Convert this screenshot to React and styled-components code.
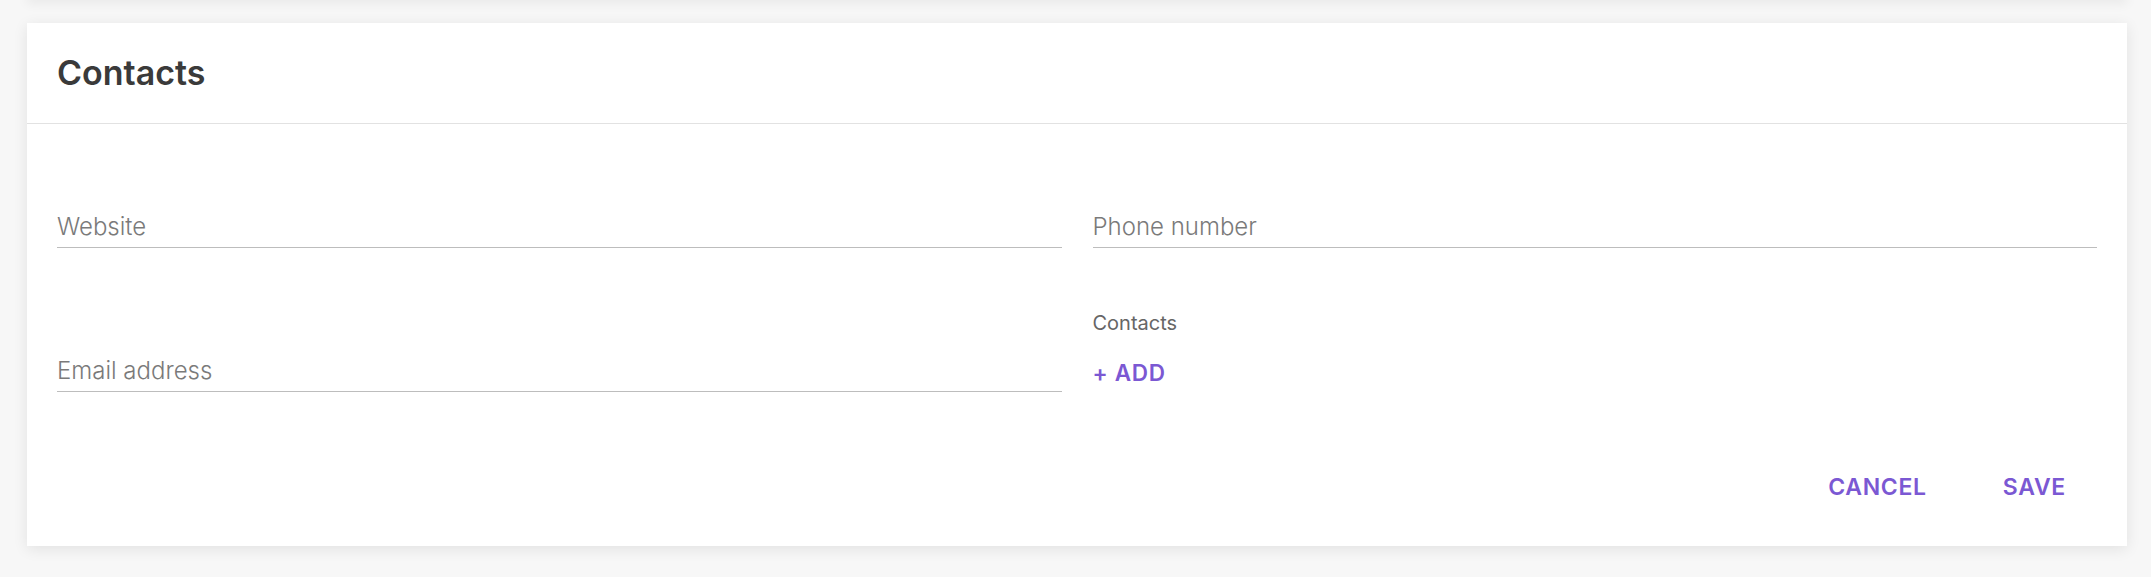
import { useState } from 'react'
import styled, { createGlobalStyle } from 'styled-components'

const GlobalStyle = createGlobalStyle`
	html, body {
		margin: 0;
		padding: 0;
		background: #f7f7f7;
		font-family: Inter, 'Noto Sans', 'Liberation Sans', sans-serif;
	}
	* {
		box-sizing: border-box;
	}
`

const Page = styled.div`
	padding: 23px 24px 31px 27px;
`

const PrevCard = styled.div`
	height: 10px;
	margin: -33px 0 23px;
	background: #fff;
	box-shadow: 0 3px 12px rgba(0, 0, 0, 0.07);
`

const Card = styled.section`
	width: 2100px;
	background: #fff;
	box-shadow: 0 3px 14px rgba(0, 0, 0, 0.09);
`

const CardHeader = styled.header`
	height: 101px;
	display: flex;
	align-items: center;
	padding: 0 30px;
	border-bottom: 1px solid #e2e2e2;
`

const Title = styled.h2`
	margin: 0;
	font-size: 34px;
	font-weight: 600;
	color: #3a3a3a;
	line-height: 40px;
`

const Body = styled.div`
	display: grid;
	grid-template-columns: 1fr 1fr;
	column-gap: 31px;
	row-gap: 63px;
	padding: 86px 30px 0;
`

const Cell = styled.div`
	display: flex;
	flex-direction: column;
	justify-content: flex-end;
`

const Input = styled.input`
	width: 100%;
	border: none;
	border-bottom: 1px solid #bdbdbd;
	padding: 0 0 5px;
	margin: 0;
	font-family: inherit;
	font-size: 24px;
	font-weight: 300;
	line-height: 32px;
	height: 38px;
	color: #333;
	background: transparent;
	outline: none;
	&::placeholder {
		color: #7a7a7a;
		opacity: 1;
	}
`

const Label = styled.div`
	font-size: 20px;
	line-height: 24px;
	color: #666;
	margin-bottom: 24px;
`

const TextButton = styled.button`
	border: none;
	background: none;
	cursor: pointer;
	font-family: inherit;
	font-size: ${props => (props.$inline ? '22.5px' : '23px')};
	font-weight: 600;
	line-height: 28px;
	letter-spacing: 0.7px;
	color: #7b58d3;
	text-transform: uppercase;
	padding: ${props => (props.$inline ? '0' : '8px 31px')};
	margin-bottom: ${props => (props.$inline ? '5px' : '0')};
	align-self: flex-start;
`

const Actions = styled.div`
	display: flex;
	justify-content: flex-end;
	gap: 14px;
	padding: 73px 30px 37px;
`

export default function App() {
	const [website, setWebsite] = useState('')
	const [phone, setPhone] = useState('')
	const [email, setEmail] = useState('')

	return (
		<>
			<GlobalStyle />
			<Page>
				<PrevCard />
				<Card>
					<CardHeader>
						<Title>Contacts</Title>
					</CardHeader>
					<Body>
						<Cell>
							<Input
								placeholder='Website'
								value={website}
								onChange={ev => setWebsite(ev.target.value)}
							/>
						</Cell>
						<Cell>
							<Input
								placeholder='Phone number'
								value={phone}
								onChange={ev => setPhone(ev.target.value)}
							/>
						</Cell>
						<Cell>
							<Input
								placeholder='Email address'
								value={email}
								onChange={ev => setEmail(ev.target.value)}
							/>
						</Cell>
						<Cell>
							<Label>Contacts</Label>
							<TextButton $inline>+ Add</TextButton>
						</Cell>
					</Body>
					<Actions>
						<TextButton>Cancel</TextButton>
						<TextButton>Save</TextButton>
					</Actions>
				</Card>
			</Page>
		</>
	)
}
